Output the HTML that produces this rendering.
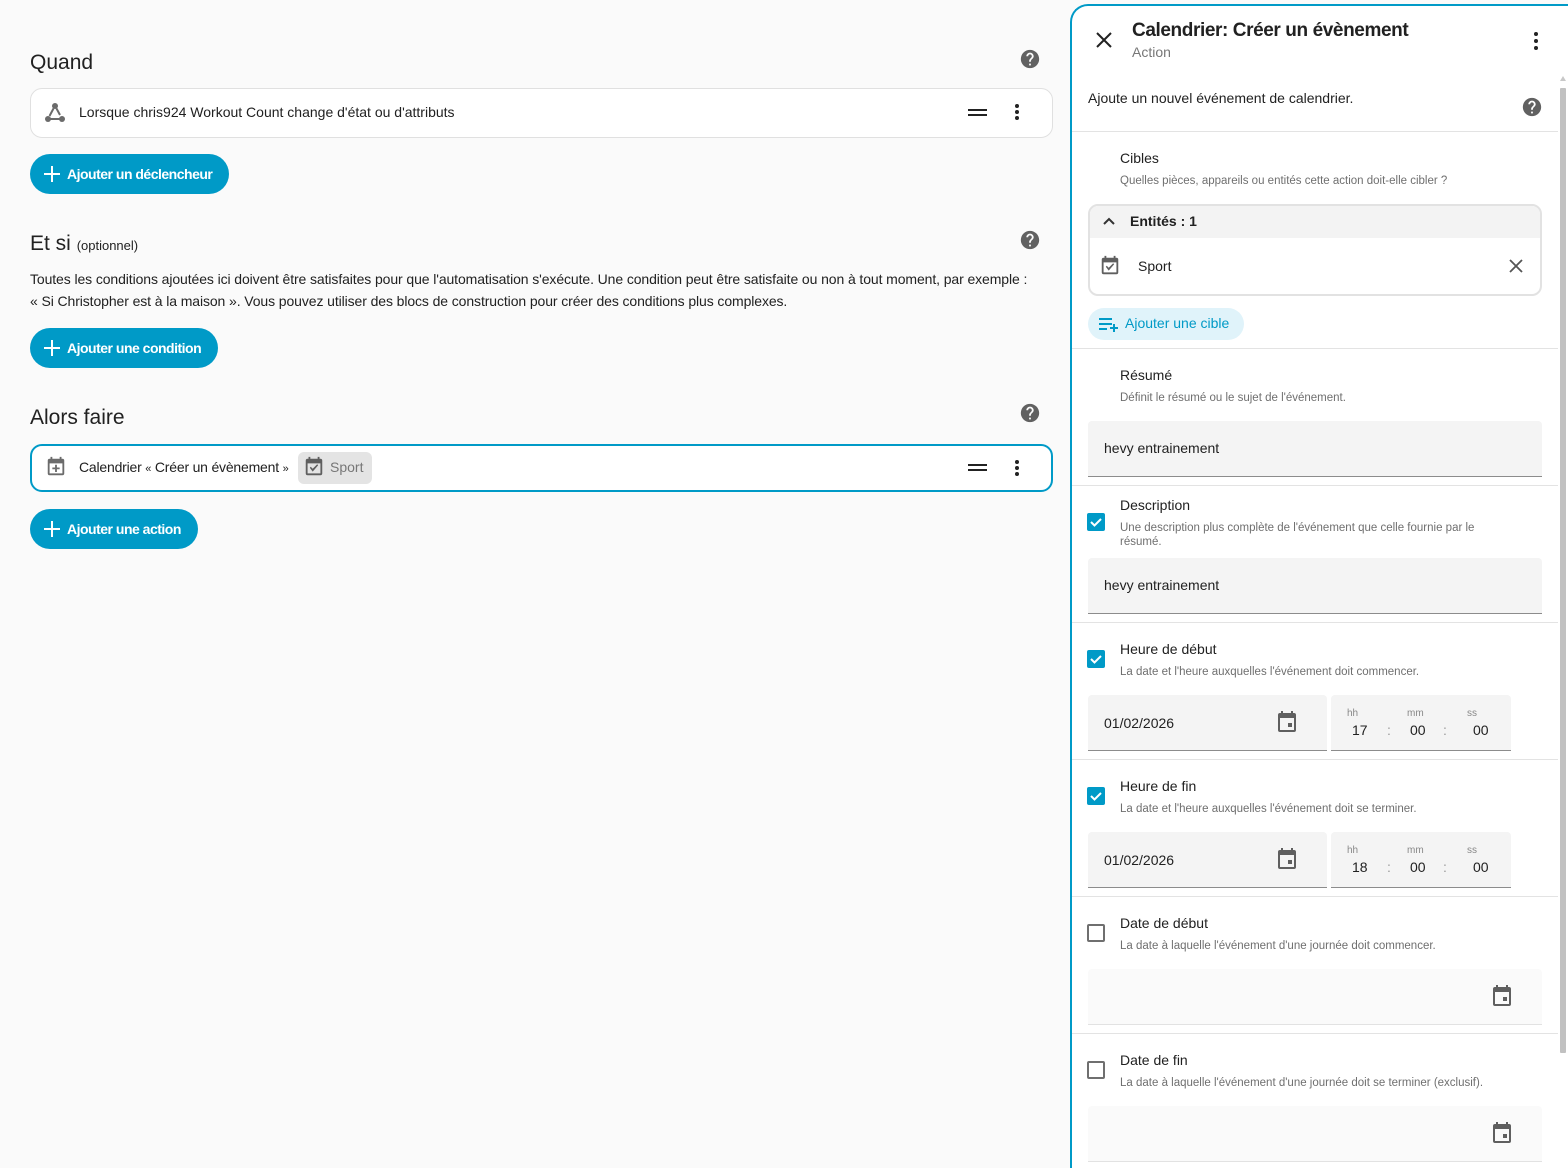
<!DOCTYPE html>
<html><head><meta charset="utf-8">
<style>
*{box-sizing:border-box;margin:0;padding:0}
html{width:1568px;height:1168px;overflow:hidden}
body{width:1568px;height:1168px;overflow:hidden;background:#fafafa;font-family:"Liberation Sans",sans-serif;color:#212121;position:relative}
.a{position:absolute}
h2{position:absolute;font-weight:400;font-size:21px;color:#212121;left:30px}
.card{position:absolute;left:30px;width:1023px;background:#fff;border:1px solid #e0e0e0;border-radius:12px}
.btn{position:absolute;left:30px;height:40px;border-radius:20px;background:#009ac7;color:#fff;font-weight:700;font-size:14px;line-height:40px;padding-left:37px;padding-right:17px;letter-spacing:-0.5px}
.btn:before{content:"";position:absolute;left:14px;top:19px;width:16px;height:2px;background:#fff}
.btn:after{content:"";position:absolute;left:21px;top:12px;width:2px;height:16px;background:#fff}
.t14{font-size:14px}
.panel{position:absolute;left:1070px;top:4px;width:520px;height:1170px;background:#fff;border:2px solid #009ac7;border-bottom:none;border-right:none;border-radius:18px 0 0 0}
.div{position:absolute;left:1072px;width:486px;height:1px;background:#e3e3e3}
.lbl{position:absolute;left:1120px;font-size:14px;color:#212121}
.sub{position:absolute;left:1120px;font-size:11.5px;color:#6f6f6f;line-height:14px}
.fld{position:absolute;background:#f4f4f4;border-bottom:1px solid #8c8c8c;border-radius:4px 4px 0 0;font-size:14px;color:#212121}
.fld2{position:absolute;background:#fafafa;border-bottom:1px solid #e2e2e2;border-radius:4px 4px 0 0;left:1088px;width:454px;height:56px}
.cb{position:absolute;left:1087px;width:18px;height:18px;border-radius:2px;background:#009ac7}
.cbo{position:absolute;left:1087px;width:18px;height:18px;border-radius:2px;border:2px solid #6f6f6f}
.tm{position:absolute;font-size:10px;color:#888}
.tv{position:absolute;font-size:14px;color:#212121}
</style></head><body>

<h2 style="top:51px">Quand</h2>
<svg class="a" style="left:1019px;top:48px" width="22" height="22" viewBox="0 0 24 24"><path fill="#616161" d="M15.07 11.25l-.9.92C13.45 12.89 13 13.5 13 15h-2v-.5c0-1.11.45-2.11 1.17-2.83l1.24-1.26c.37-.36.59-.86.59-1.41 0-1.11-.9-2-2-2s-2 .89-2 2H8c0-2.21 1.79-4 4-4s4 1.79 4 4c0 .88-.36 1.67-.93 2.25M13 19h-2v-2h2M12 2A10 10 0 0 0 2 12a10 10 0 0 0 10 10 10 10 0 0 0 10-10c0-5.53-4.5-10-10-10z"/></svg>
<div class="card" style="top:88px;height:50px"></div>
<svg class="a" style="left:43px;top:101px" width="24" height="24" viewBox="0 0 24 24"><g fill="#6b6b6b"><circle cx="12" cy="5" r="3"/><circle cx="5" cy="18" r="3"/><circle cx="19" cy="18" r="3"/></g><g stroke="#6b6b6b" stroke-width="2" fill="none"><path d="M10.5 7.5L6.5 15M13.5 7.5L17 14M7.5 18h9"/></g></svg>
<div class="a t14" style="left:79px;top:104px">Lorsque chris924 Workout Count change d'état ou d'attributs</div>
<div class="a" style="left:968px;top:109px;width:19px;height:2px;background:#222"></div>
<div class="a" style="left:968px;top:114px;width:19px;height:2px;background:#222"></div>
<svg class="a" style="left:1007px;top:102px" width="20" height="20" viewBox="0 0 20 20"><g fill="#222"><circle cx="10" cy="4" r="2"/><circle cx="10" cy="10" r="2"/><circle cx="10" cy="16" r="2"/></g></svg>
<div class="btn" style="top:154px">Ajouter un déclencheur</div>

<h2 style="top:232px">Et si <span style="font-size:13px">(optionnel)</span></h2>
<svg class="a" style="left:1019px;top:229px" width="22" height="22" viewBox="0 0 24 24"><path fill="#616161" d="M15.07 11.25l-.9.92C13.45 12.89 13 13.5 13 15h-2v-.5c0-1.11.45-2.11 1.17-2.83l1.24-1.26c.37-.36.59-.86.59-1.41 0-1.11-.9-2-2-2s-2 .89-2 2H8c0-2.21 1.79-4 4-4s4 1.79 4 4c0 .88-.36 1.67-.93 2.25M13 19h-2v-2h2M12 2A10 10 0 0 0 2 12a10 10 0 0 0 10 10 10 10 0 0 0 10-10c0-5.53-4.5-10-10-10z"/></svg>
<div class="a t14" style="left:30px;top:268px;width:1030px;line-height:22px;letter-spacing:-0.1px">Toutes les conditions ajoutées ici doivent être satisfaites pour que l'automatisation s'exécute. Une condition peut être satisfaite ou non à tout moment, par exemple :<br>« Si Christopher est à la maison ». Vous pouvez utiliser des blocs de construction pour créer des conditions plus complexes.</div>
<div class="btn" style="top:328px">Ajouter une condition</div>

<h2 style="top:406px">Alors faire</h2>
<svg class="a" style="left:1019px;top:402px" width="22" height="22" viewBox="0 0 24 24"><path fill="#616161" d="M15.07 11.25l-.9.92C13.45 12.89 13 13.5 13 15h-2v-.5c0-1.11.45-2.11 1.17-2.83l1.24-1.26c.37-.36.59-.86.59-1.41 0-1.11-.9-2-2-2s-2 .89-2 2H8c0-2.21 1.79-4 4-4s4 1.79 4 4c0 .88-.36 1.67-.93 2.25M13 19h-2v-2h2M12 2A10 10 0 0 0 2 12a10 10 0 0 0 10 10 10 10 0 0 0 10-10c0-5.53-4.5-10-10-10z"/></svg>
<div class="card" style="top:444px;height:48px;border:2px solid #009ac7"></div>
<svg class="a" style="left:45px;top:456px" width="22" height="22" viewBox="0 0 24 24"><path fill="#6b6b6b" d="M19 19V8H5v11h14M16 1h2v2h1a2 2 0 0 1 2 2v14a2 2 0 0 1-2 2H5a2 2 0 0 1-2-2V5a2 2 0 0 1 2-2h1V1h2v2h8V1m-5 8.5h2v3h3v2h-3v3h-2v-3H8v-2h3v-3z"/></svg>
<div class="a t14" style="left:79px;top:459px;letter-spacing:-0.2px">Calendrier <span style="font-size:11px">«</span> Créer un évènement <span style="font-size:11px">»</span></div>
<div class="a" style="left:298px;top:452px;width:74px;height:32px;background:#e4e4e4;border-radius:6px"></div>
<svg class="a" style="left:303px;top:456px" width="22" height="22" viewBox="0 0 24 24"><path fill="#5f5f5f" d="M19 19H5V8h14m0-5h-1V1h-2v2H8V1H6v2H5a2 2 0 0 0-2 2v14a2 2 0 0 0 2 2h14a2 2 0 0 0 2-2V5a2 2 0 0 0-2-2m-2.47 7.06l-1.06-1.06-4.88 4.88-2.12-2.12-1.06 1.06L10.59 17"/></svg>
<div class="a t14" style="left:330px;top:459px;color:#777">Sport</div>
<div class="a" style="left:968px;top:464px;width:19px;height:2px;background:#222"></div>
<div class="a" style="left:968px;top:469px;width:19px;height:2px;background:#222"></div>
<svg class="a" style="left:1007px;top:458px" width="20" height="20" viewBox="0 0 20 20"><g fill="#222"><circle cx="10" cy="4" r="2"/><circle cx="10" cy="10" r="2"/><circle cx="10" cy="16" r="2"/></g></svg>
<div class="btn" style="top:509px">Ajouter une action</div>

<div class="panel"></div>
<svg class="a" style="left:1094px;top:30px" width="20" height="20" viewBox="0 0 20 20"><path d="M3 3L17 17M17 3L3 17" stroke="#222" stroke-width="2"/></svg>
<div class="a" style="left:1132px;top:20px;font-size:19px;font-weight:700;color:#212121;letter-spacing:-0.4px">Calendrier: Créer un évènement</div>
<div class="a" style="left:1132px;top:44px;font-size:14px;color:#777">Action</div>
<svg class="a" style="left:1526px;top:31px" width="20" height="20" viewBox="0 0 20 20"><g fill="#222"><circle cx="10" cy="3" r="2"/><circle cx="10" cy="10" r="2"/><circle cx="10" cy="17" r="2"/></g></svg>
<div class="a" style="left:1560px;top:88px;width:6px;height:965px;background:#c1c1c1;border-radius:1px"></div>
<div class="a" style="left:1560px;top:76px;width:0;height:0;border-left:3px solid transparent;border-right:3px solid transparent;border-bottom:5px solid #c8c8c8"></div>

<div class="a t14" style="left:1088px;top:90px">Ajoute un nouvel événement de calendrier.</div>
<svg class="a" style="left:1521px;top:96px" width="22" height="22" viewBox="0 0 24 24"><path fill="#616161" d="M15.07 11.25l-.9.92C13.45 12.89 13 13.5 13 15h-2v-.5c0-1.11.45-2.11 1.17-2.83l1.24-1.26c.37-.36.59-.86.59-1.41 0-1.11-.9-2-2-2s-2 .89-2 2H8c0-2.21 1.79-4 4-4s4 1.79 4 4c0 .88-.36 1.67-.93 2.25M13 19h-2v-2h2M12 2A10 10 0 0 0 2 12a10 10 0 0 0 10 10 10 10 0 0 0 10-10c0-5.53-4.5-10-10-10z"/></svg>
<div class="div" style="top:131px"></div>

<div class="lbl" style="top:150px">Cibles</div>
<div class="sub" style="top:174px">Quelles pièces, appareils ou entités cette action doit-elle cibler ?</div>
<div class="a" style="left:1088px;top:204px;width:454px;height:92px;border:2px solid #e2e2e2;border-radius:10px;overflow:hidden"><div style="height:32px;background:#f3f3f3"></div></div>
<svg class="a" style="left:1102px;top:214px" width="14" height="14" viewBox="0 0 14 14"><path d="M2 10L7 5l5 5" stroke="#333" stroke-width="2" fill="none"/></svg>
<div class="a t14" style="left:1130px;top:213px;font-weight:700">Entités : 1</div>
<svg class="a" style="left:1099px;top:255px" width="22" height="22" viewBox="0 0 24 24"><path fill="#5f5f5f" d="M19 19H5V8h14m0-5h-1V1h-2v2H8V1H6v2H5a2 2 0 0 0-2 2v14a2 2 0 0 0 2 2h14a2 2 0 0 0 2-2V5a2 2 0 0 0-2-2m-2.47 7.06l-1.06-1.06-4.88 4.88-2.12-2.12-1.06 1.06L10.59 17"/></svg>
<div class="a t14" style="left:1138px;top:258px">Sport</div>
<svg class="a" style="left:1508px;top:258px" width="16" height="16" viewBox="0 0 16 16"><path d="M2 2L14 14M14 2L2 14" stroke="#555" stroke-width="1.8"/></svg>
<div class="a" style="left:1088px;top:308px;width:156px;height:32px;background:#e0f3fa;border-radius:16px"></div>
<svg class="a" style="left:1099px;top:316px" width="20" height="16" viewBox="0 0 20 16"><path d="M0 3h13M0 8h13M0 13h8M15 8v8M11 12h8" stroke="#009ac7" stroke-width="2"/></svg>
<div class="a t14" style="left:1125px;top:315px;color:#009ac7">Ajouter une cible</div>
<div class="div" style="top:348px"></div>

<div class="lbl" style="top:367px">Résumé</div>
<div class="sub" style="top:391px">Définit le résumé ou le sujet de l'événement.</div>
<div class="fld" style="left:1088px;top:421px;width:454px;height:56px;padding:19px 16px">hevy entrainement</div>
<div class="div" style="top:485px"></div>

<div class="cb" style="top:513px"><svg width="18" height="18" viewBox="0 0 18 18"><path d="M4 9l3.5 3.5L14 6" stroke="#fff" stroke-width="2" fill="none"/></svg></div>
<div class="lbl" style="top:497px">Description</div>
<div class="sub" style="top:521px;width:380px">Une description plus complète de l'événement que celle fournie par le résumé.</div>
<div class="fld" style="left:1088px;top:558px;width:454px;height:56px;padding:19px 16px">hevy entrainement</div>
<div class="div" style="top:622px"></div>

<div class="cb" style="top:650px"><svg width="18" height="18" viewBox="0 0 18 18"><path d="M4 9l3.5 3.5L14 6" stroke="#fff" stroke-width="2" fill="none"/></svg></div>
<div class="lbl" style="top:641px">Heure de début</div>
<div class="sub" style="top:665px">La date et l'heure auxquelles l'événement doit commencer.</div>
<div class="fld" style="left:1088px;top:695px;width:239px;height:56px;padding:20px 16px">01/02/2026</div>
<svg class="a" style="left:1277px;top:711px" width="20" height="22" viewBox="0 0 20 22"><path fill="#5f5f5f" d="M4 0h2v2h8V0h2v2h1a2 2 0 0 1 2 2v15a2 2 0 0 1-2 2H3a2 2 0 0 1-2-2V4a2 2 0 0 1 2-2h1zM3 7v12h14V7zm8 5h4v4h-4z"/></svg>
<div class="fld" style="left:1331px;top:695px;width:180px;height:56px"></div>
<div class="tm" style="left:1347px;top:708px">hh</div><div class="tm" style="left:1407px;top:708px">mm</div><div class="tm" style="left:1467px;top:708px">ss</div>
<div class="tv" style="left:1352px;top:722px">17</div><div class="tv" style="left:1387px;top:722px;color:#999">:</div><div class="tv" style="left:1410px;top:722px">00</div><div class="tv" style="left:1443px;top:722px;color:#999">:</div><div class="tv" style="left:1473px;top:722px">00</div>
<div class="div" style="top:759px"></div>

<div class="cb" style="top:787px"><svg width="18" height="18" viewBox="0 0 18 18"><path d="M4 9l3.5 3.5L14 6" stroke="#fff" stroke-width="2" fill="none"/></svg></div>
<div class="lbl" style="top:778px">Heure de fin</div>
<div class="sub" style="top:802px">La date et l'heure auxquelles l'événement doit se terminer.</div>
<div class="fld" style="left:1088px;top:832px;width:239px;height:56px;padding:20px 16px">01/02/2026</div>
<svg class="a" style="left:1277px;top:848px" width="20" height="22" viewBox="0 0 20 22"><path fill="#5f5f5f" d="M4 0h2v2h8V0h2v2h1a2 2 0 0 1 2 2v15a2 2 0 0 1-2 2H3a2 2 0 0 1-2-2V4a2 2 0 0 1 2-2h1zM3 7v12h14V7zm8 5h4v4h-4z"/></svg>
<div class="fld" style="left:1331px;top:832px;width:180px;height:56px"></div>
<div class="tm" style="left:1347px;top:845px">hh</div><div class="tm" style="left:1407px;top:845px">mm</div><div class="tm" style="left:1467px;top:845px">ss</div>
<div class="tv" style="left:1352px;top:859px">18</div><div class="tv" style="left:1387px;top:859px;color:#999">:</div><div class="tv" style="left:1410px;top:859px">00</div><div class="tv" style="left:1443px;top:859px;color:#999">:</div><div class="tv" style="left:1473px;top:859px">00</div>
<div class="div" style="top:896px"></div>

<div class="cbo" style="top:924px"></div>
<div class="lbl" style="top:915px">Date de début</div>
<div class="sub" style="top:939px">La date à laquelle l'événement d'une journée doit commencer.</div>
<div class="fld2" style="top:969px"></div>
<svg class="a" style="left:1492px;top:985px" width="20" height="22" viewBox="0 0 20 22"><path fill="#5f5f5f" d="M4 0h2v2h8V0h2v2h1a2 2 0 0 1 2 2v15a2 2 0 0 1-2 2H3a2 2 0 0 1-2-2V4a2 2 0 0 1 2-2h1zM3 7v12h14V7zm8 5h4v4h-4z"/></svg>
<div class="div" style="top:1033px"></div>

<div class="cbo" style="top:1061px"></div>
<div class="lbl" style="top:1052px">Date de fin</div>
<div class="sub" style="top:1076px">La date à laquelle l'événement d'une journée doit se terminer (exclusif).</div>
<div class="fld2" style="top:1106px"></div>
<svg class="a" style="left:1492px;top:1122px" width="20" height="22" viewBox="0 0 20 22"><path fill="#5f5f5f" d="M4 0h2v2h8V0h2v2h1a2 2 0 0 1 2 2v15a2 2 0 0 1-2 2H3a2 2 0 0 1-2-2V4a2 2 0 0 1 2-2h1zM3 7v12h14V7zm8 5h4v4h-4z"/></svg>
</body></html>
